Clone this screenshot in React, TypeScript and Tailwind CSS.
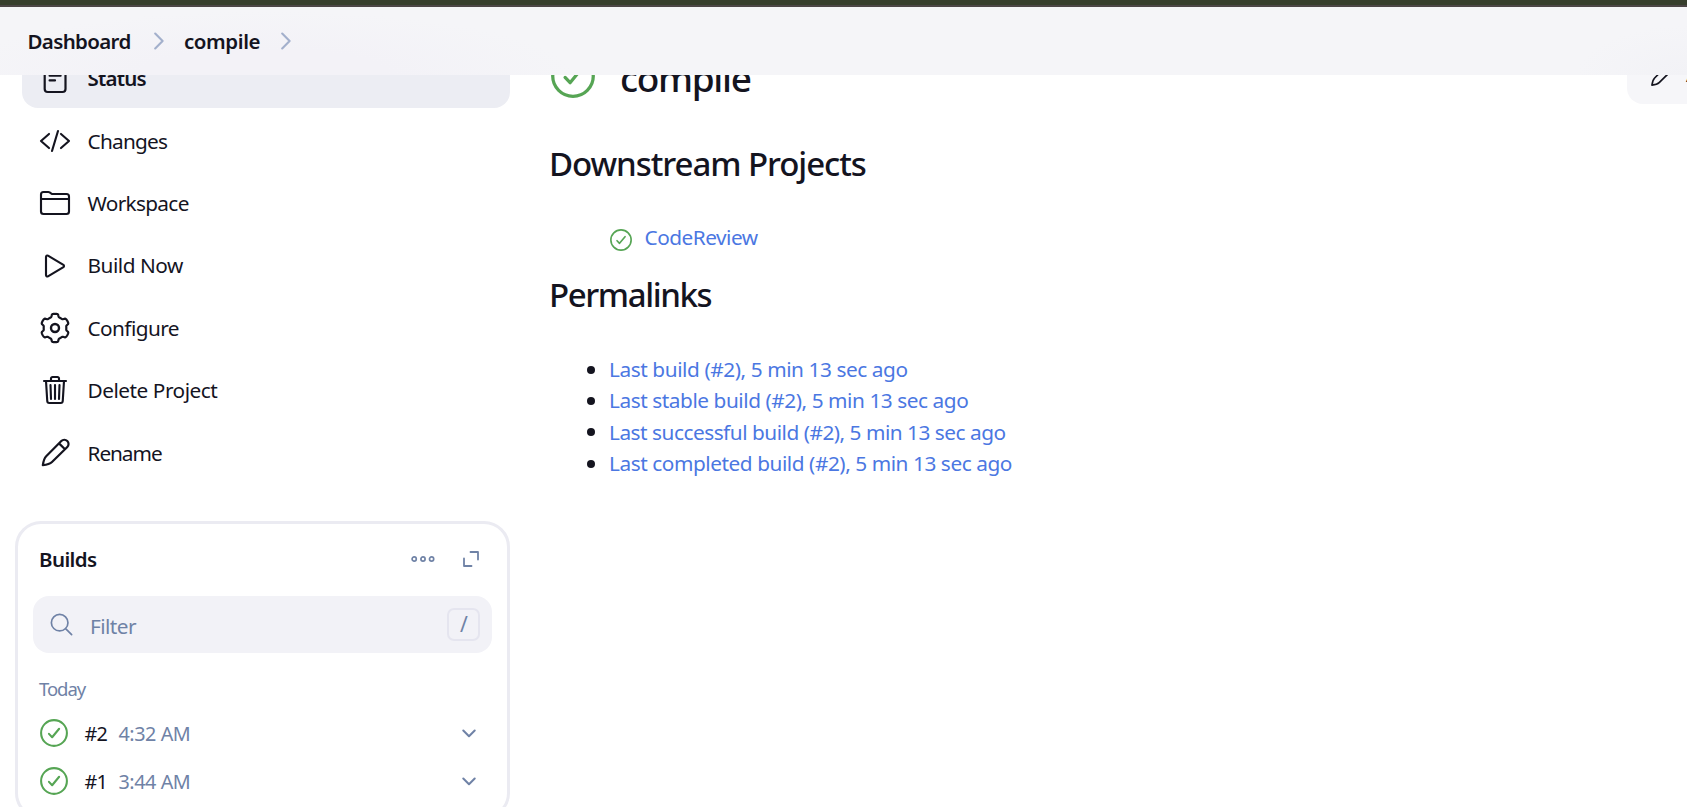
import type { ReactNode } from "react";

const gearPath =
  Array.from({ length: 180 }, (_, i) => {
    const angle = (i / 180) * Math.PI * 2;
    const r = 12.75 + 1.45 * Math.tanh(3 * (Math.cos(6 * angle) + 0.05));
    const x = 16 + r * Math.sin(angle);
    const y = 16 - r * Math.cos(angle);
    return `${i === 0 ? "M" : "L"}${x.toFixed(2)} ${y.toFixed(2)}`;
  }).join("") + "Z";

function Ion({ className, width = 34, children }: { className: string; width?: number; children: ReactNode }) {
  return (
    <svg
      viewBox="0 0 512 512"
      className={className}
      fill="none"
      stroke="currentColor"
      strokeWidth={width}
      strokeLinecap="round"
      strokeLinejoin="round"
    >
      {children}
    </svg>
  );
}

function Small({ viewBox = "0 0 32 32", children }: { viewBox?: string; children: ReactNode }) {
  return (
    <svg
      viewBox={viewBox}
      className="size-8"
      fill="none"
      stroke="currentColor"
      strokeWidth={2.2}
      strokeLinecap="round"
      strokeLinejoin="round"
    >
      {children}
    </svg>
  );
}

function Pencil() {
  return (
    <Small viewBox="4 3 32 32">
      <path d="M7.8 31.2C8.3 28 8.8 24.6 11.2 22.2L26.3 7A4.2 4.2 0 0 1 32.3 13L17 28C14.5 30.4 11.2 30.8 7.8 31.2ZM24 9.4L30 15.3" />
    </Small>
  );
}

function Success({ className }: { className: string }) {
  return (
    <svg
      viewBox="0 0 512 512"
      className={`shrink-0 text-[#56a554] ${className}`}
      fill="none"
      stroke="currentColor"
      strokeWidth={38}
      strokeLinecap="round"
      strokeLinejoin="round"
    >
      <circle cx="256" cy="256" r="236" />
      <path d="M350 178L222 334L164 272" />
    </svg>
  );
}

const tasks: { label: string; tracking: string; icon: ReactNode }[] = [
  {
    label: "Changes",
    tracking: "tracking-[-0.75px]",
    icon: (
      <Ion className="size-8">
        <path d="M160 368L32 256l128-112M352 368l128-112-128-112M304 96l-96 320" />
      </Ion>
    ),
  },
  {
    label: "Workspace",
    tracking: "tracking-[-0.68px]",
    icon: (
      <Ion className="size-8 -translate-y-px">
        <path d="M440 432H72a40 40 0 01-40-40V120a40 40 0 0140-40h75.89a40 40 0 0122.19 6.72l27.84 18.56a40 40 0 0022.19 6.72H440a40 40 0 0140 40v240a40 40 0 01-40 40zM32 192h448" />
      </Ion>
    ),
  },
  {
    label: "Build Now",
    tracking: "tracking-[-0.48px]",
    icon: (
      <Ion className="size-8">
        <path d="M112 111v290c0 17.44 17 28.52 31 20.16l247.9-148.37c12.12-7.25 12.12-26.33 0-33.58L143 90.84c-14-8.36-31 2.72-31 20.16z" />
      </Ion>
    ),
  },
  {
    label: "Configure",
    tracking: "tracking-[-0.58px]",
    icon: (
      <Small>
        <path d={gearPath} />
        <circle cx="16" cy="16" r="4" strokeWidth={2.4} />
      </Small>
    ),
  },
  {
    label: "Delete Project",
    tracking: "tracking-[-0.48px]",
    icon: (
      <Ion className="size-8 -translate-y-px">
        <path d="M112 112l20 320c.95 18.49 14.4 32 32 32h184c17.67 0 30.87-13.51 32-32l20-320M80 112h352M192 112V72a23.93 23.93 0 0124-24h80a23.93 23.93 0 0124 24v40M256 176v224M184 176l8 224M328 176l-8 224" />
      </Ion>
    ),
  },
  { label: "Rename", tracking: "tracking-[-1.05px]", icon: <Pencil /> },
];

const builds = [
  { id: "#2", time: "4:32 AM" },
  { id: "#1", time: "3:44 AM" },
];

const permalinks = [
  { name: "Last build", tracking: "tracking-[-0.42px]" },
  { name: "Last stable build", tracking: "tracking-[-0.44px]" },
  { name: "Last successful build", tracking: "tracking-[-0.48px]" },
  { name: "Last completed build", tracking: "tracking-[-0.44px]" },
];

function Separator() {
  return (
    <svg viewBox="0 0 10 18" className="h-[18px] w-2.5" fill="none" stroke="#a3b0cc" strokeWidth={2.1} strokeLinecap="round" strokeLinejoin="round">
      <path d="M1.2 1.6L8.6 9L1.2 16.4" />
    </svg>
  );
}

function Breadcrumbs() {
  return (
    <header className="absolute inset-x-0 top-0 z-10">
      <div className="h-[7px] border-b-2 border-[#4c4646] bg-[#373f2d]" />
      <nav className="flex h-[68px] items-center bg-[#f5f5f8] bg-[radial-gradient(ellipse_310px_64px_at_265px_100%,#f3f2f7_40%,transparent),radial-gradient(ellipse_110px_50px_at_100%_100%,#f2f2f6,transparent)] pl-[27.5px] text-[20.5px] font-semibold">
        <span className="w-[126px] tracking-[-0.65px]">Dashboard</span>
        <Separator />
        <span className="ml-[20.5px] w-[97px] tracking-[-0.42px]">compile</span>
        <Separator />
      </nav>
    </header>
  );
}

function Tasks() {
  return (
    <div className="flex flex-col gap-1 pl-[22px]">
      <a className="flex h-[58px] items-center gap-[16.5px] rounded-2xl bg-[#ecedf3] pl-[17px] text-[20.5px] font-semibold tracking-[-0.8px]">
        <Small>
          <rect x="5.7" y="2.6" width="20.8" height="26.4" rx="3" />
          <path d="M10.6 8h11M10.6 12.7h11M10.6 17.4h5.4" />
        </Small>
        <span className="pb-0.5">Status</span>
      </a>
      {tasks.map((t) => (
        <a key={t.label} className={`flex h-[58.4px] items-center gap-[16.5px] pl-[17px] ${t.tracking}`}>
          {t.icon}
          {t.label}
        </a>
      ))}
    </div>
  );
}

function Builds() {
  return (
    <section className="mt-[39px] ml-[15px] h-[298px] rounded-[26px] border-3 border-[#ebebf2] px-[15px] text-[#6f82a6]">
      <div className="flex h-[72px] items-center pr-[13px] pb-0.5 pl-1.5">
        <h2 className="flex-1 text-[20.5px] font-semibold tracking-[-0.6px] text-[#14141f]">Builds</h2>
        <svg viewBox="0 0 24 8" className="mr-7 h-2 w-6" fill="none" stroke="currentColor" strokeWidth={1.7}>
          <circle cx="3.2" cy="4" r="2.1" />
          <circle cx="12" cy="4" r="2.1" />
          <circle cx="20.6" cy="4" r="2.1" />
        </svg>
        <svg viewBox="0 0 16 16" className="size-4" fill="none" stroke="currentColor" strokeWidth={1.8} strokeLinecap="round" strokeLinejoin="round">
          <path d="M7.5 1H15V8.5M1 7.5V15H8.5" />
        </svg>
      </div>
      <div className="flex h-[57px] items-center rounded-2xl bg-[#f2f2f7] pr-3 pl-[15px]">
        <Ion className="size-[27px]" width={32}>
          <path d="M221.09 64a157.09 157.09 0 10157.09 157.09A157.1 157.1 0 00221.09 64zM338.29 338.29L448 448" />
        </Ion>
        <span className="ml-[15px] flex-1 pt-1 tracking-[-0.55px]">Filter</span>
        <kbd className="flex size-[33px] items-center justify-center rounded-[7px] border-2 border-[#e5e5ef] pl-px font-['Noto_Sans',sans-serif] text-[21px]">
          /
        </kbd>
      </div>
      <p className="mt-[22px] pl-1.5 text-[18.5px] leading-7 tracking-[-1.05px]">Today</p>
      <div className="mt-[6px] flex flex-col">
        {builds.map((b) => (
          <div key={b.id} className="flex h-12 items-center pr-4 pl-[7px] text-[19.8px]">
            <Success className="size-7" />
            <span className="ml-[16.5px] w-[34px] tracking-[-0.9px] text-[#14141f]">{b.id}</span>
            <span className="flex-1 tracking-[-0.45px]">{b.time}</span>
            <svg viewBox="0 0 14 9" className="h-[9px] w-3.5" fill="none" stroke="currentColor" strokeWidth={2} strokeLinecap="round" strokeLinejoin="round">
              <path d="M1.3 1.5L7 7.2L12.7 1.5" />
            </svg>
          </div>
        ))}
      </div>
    </section>
  );
}

export default function App() {
  return (
    <div className="relative flex h-[807px] w-full overflow-hidden bg-white font-['Noto_Sans',sans-serif] text-[20.8px] text-[#14141f]">
      <Breadcrumbs />
      <aside className="w-[510px] shrink-0 pt-[50px]">
        <Tasks />
        <Builds />
      </aside>
      <main className="min-w-0 flex-1 pt-[45px] pl-[39px]">
        <div className="flex h-[62px] items-center pl-0.5">
          <Success className="size-11" />
          <h1 className="ml-[25px] flex-1 pt-1 text-[37px] font-medium tracking-[-1.35px]">compile</h1>
          <button className="flex h-[59px] w-[60px] items-center gap-px self-start overflow-hidden rounded-l-2xl bg-[#f6f6f9] pl-[22px] whitespace-nowrap">
            <span className="w-9 shrink-0 translate-y-px [&>svg]:size-[25px]">
              <Pencil />
            </span>
            Add description
          </button>
        </div>
        <h2 className="mt-9 text-[33px] leading-[42px] font-medium tracking-[-1.06px]">Downstream Projects</h2>
        <div className="mt-[37px] flex h-8 items-center pl-[61px] text-[#4b77e2]">
          <Success className="mt-1 size-[22px]" />
          <a className="ml-[12.5px] tracking-[-0.5px]">CodeReview</a>
        </div>
        <h2 className="mt-5 text-[33px] leading-[42px] font-medium tracking-[-1.4px]">Permalinks</h2>
        <ul className="mt-[38px]">
          {permalinks.map((p) => (
            <li key={p.name} className={`flex h-[31.4px] items-center pl-[38px] ${p.tracking}`}>
              <span className="mr-3.5 size-2 rounded-full bg-[#14141f]" />
              <a className="text-[#4b77e2]">{p.name} (#2), 5 min 13 sec ago</a>
            </li>
          ))}
        </ul>
      </main>
    </div>
  );
}
